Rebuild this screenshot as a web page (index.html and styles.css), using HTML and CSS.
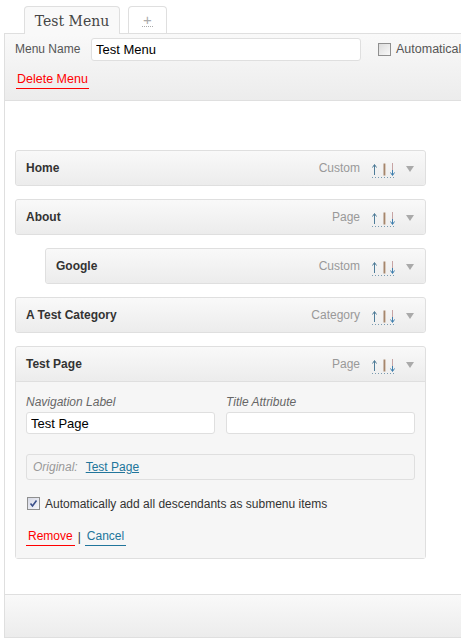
FILE: index.html
```html
<!DOCTYPE html>
<html>
<head>
<meta charset="utf-8">
<link rel="stylesheet" href="styles.css">
</head>
<body>
<div class="tabs">
  <div class="tab tab-active">Test Menu</div>
  <div class="tab tab-add"><span class="plus">+</span></div>
</div>
<div class="panel">
  <div class="panel-head">
    <div class="name-row">
      <span class="name-label">Menu Name</span>
      <input class="text-input name-input" type="text" value="Test Menu">
      <span class="auto">
        <span class="cb"></span>
        <span class="auto-text">Automatically add new top-level pages</span>
      </span>
    </div>
    <div class="del-row"><a class="delete">Delete Menu</a></div>
  </div>

  <div class="panel-body">
    <ul class="menu">
      <li class="item">
        <div class="item-head">
          <span class="item-title">Home</span>
          <span class="item-type">Custom</span>
          <svg class="arrows" width="28" height="18" viewBox="0 0 28 18"><g fill="none" stroke-width="1"><path d="M3.5 5 V15" stroke="#4f7c98"/><path d="M1.5 7.5 L3.5 4.5 L5.5 7.5" stroke="#4f7c98"/><rect x="12.5" y="3.5" width="1.5" height="12" fill="#a5866c" stroke="none"/><rect x="14" y="3.5" width="1" height="12" fill="#d9c9bc" stroke="none"/><path d="M21.5 3 V10" stroke="#c7a4a4"/><path d="M21.5 10 V15" stroke="#3f7fae"/><path d="M19.5 12.5 L21.5 15.5 L23.5 12.5" stroke="#3f7fae"/></g><path d="M1 17.5 H25" stroke="#7a9bb0" stroke-dasharray="1 2"/></svg>
          <span class="toggle"></span>
        </div>
      </li>
      <li class="item">
        <div class="item-head">
          <span class="item-title">About</span>
          <span class="item-type">Page</span>
          <svg class="arrows" width="28" height="18" viewBox="0 0 28 18"><g fill="none" stroke-width="1"><path d="M3.5 5 V15" stroke="#4f7c98"/><path d="M1.5 7.5 L3.5 4.5 L5.5 7.5" stroke="#4f7c98"/><rect x="12.5" y="3.5" width="1.5" height="12" fill="#a5866c" stroke="none"/><rect x="14" y="3.5" width="1" height="12" fill="#d9c9bc" stroke="none"/><path d="M21.5 3 V10" stroke="#c7a4a4"/><path d="M21.5 10 V15" stroke="#3f7fae"/><path d="M19.5 12.5 L21.5 15.5 L23.5 12.5" stroke="#3f7fae"/></g><path d="M1 17.5 H25" stroke="#7a9bb0" stroke-dasharray="1 2"/></svg>
          <span class="toggle"></span>
        </div>
      </li>
      <li class="item item-sub">
        <div class="item-head">
          <span class="item-title">Google</span>
          <span class="item-type">Custom</span>
          <svg class="arrows" width="28" height="18" viewBox="0 0 28 18"><g fill="none" stroke-width="1"><path d="M3.5 5 V15" stroke="#4f7c98"/><path d="M1.5 7.5 L3.5 4.5 L5.5 7.5" stroke="#4f7c98"/><rect x="12.5" y="3.5" width="1.5" height="12" fill="#a5866c" stroke="none"/><rect x="14" y="3.5" width="1" height="12" fill="#d9c9bc" stroke="none"/><path d="M21.5 3 V10" stroke="#c7a4a4"/><path d="M21.5 10 V15" stroke="#3f7fae"/><path d="M19.5 12.5 L21.5 15.5 L23.5 12.5" stroke="#3f7fae"/></g><path d="M1 17.5 H25" stroke="#7a9bb0" stroke-dasharray="1 2"/></svg>
          <span class="toggle"></span>
        </div>
      </li>
      <li class="item">
        <div class="item-head">
          <span class="item-title">A Test Category</span>
          <span class="item-type">Category</span>
          <svg class="arrows" width="28" height="18" viewBox="0 0 28 18"><g fill="none" stroke-width="1"><path d="M3.5 5 V15" stroke="#4f7c98"/><path d="M1.5 7.5 L3.5 4.5 L5.5 7.5" stroke="#4f7c98"/><rect x="12.5" y="3.5" width="1.5" height="12" fill="#a5866c" stroke="none"/><rect x="14" y="3.5" width="1" height="12" fill="#d9c9bc" stroke="none"/><path d="M21.5 3 V10" stroke="#c7a4a4"/><path d="M21.5 10 V15" stroke="#3f7fae"/><path d="M19.5 12.5 L21.5 15.5 L23.5 12.5" stroke="#3f7fae"/></g><path d="M1 17.5 H25" stroke="#7a9bb0" stroke-dasharray="1 2"/></svg>
          <span class="toggle"></span>
        </div>
      </li>
      <li class="item item-open">
        <div class="item-head">
          <span class="item-title">Test Page</span>
          <span class="item-type">Page</span>
          <svg class="arrows" width="28" height="18" viewBox="0 0 28 18"><g fill="none" stroke-width="1"><path d="M3.5 5 V15" stroke="#4f7c98"/><path d="M1.5 7.5 L3.5 4.5 L5.5 7.5" stroke="#4f7c98"/><rect x="12.5" y="3.5" width="1.5" height="12" fill="#a5866c" stroke="none"/><rect x="14" y="3.5" width="1" height="12" fill="#d9c9bc" stroke="none"/><path d="M21.5 3 V10" stroke="#c7a4a4"/><path d="M21.5 10 V15" stroke="#3f7fae"/><path d="M19.5 12.5 L21.5 15.5 L23.5 12.5" stroke="#3f7fae"/></g><path d="M1 17.5 H25" stroke="#7a9bb0" stroke-dasharray="1 2"/></svg>
          <span class="toggle"></span>
        </div>
        <div class="item-body">
          <div class="fields">
            <div class="field">
              <div class="field-label">Navigation Label</div>
              <input class="text-input" type="text" value="Test Page">
            </div>
            <div class="field">
              <div class="field-label">Title Attribute</div>
              <input class="text-input" type="text" value="">
            </div>
          </div>
          <div class="original"><span class="orig-label">Original:</span><a class="orig-link">Test Page</a></div>
          <div class="desc-row">
            <span class="cb cb-checked"><svg width="11" height="11" viewBox="0 0 11 11"><path d="M2.5 5.5 L4.5 8 L8.5 2.5" fill="none" stroke="#3a4f8a" stroke-width="1.6"/></svg></span>
            <span class="desc-text">Automatically add all descendants as submenu items</span>
          </div>
          <div class="actions"><a class="remove">Remove</a><span class="sep">|</span><a class="cancel">Cancel</a></div>
        </div>
      </li>
    </ul>
  </div>
  <div class="panel-foot"></div>
</div>
</body>
</html>
```

FILE: styles.css
```css
html, body {
  margin: 0;
  padding: 0;
  overflow: hidden;
  background: #fff;
}
body {
  font-family: "Liberation Sans", Arial, sans-serif;
  font-size: 12px;
  color: #333;
  width: 461px;
  height: 642px;
}
.tabs {
  display: flex;
  align-items: flex-end;
  gap: 8px;
  padding: 7px 0 0 24px;
  height: 27px;
  position: relative;
  z-index: 2;
}
.tab {
  box-sizing: border-box;
  height: 28px;
  border: 1px solid #dfdfdf;
  border-bottom: none;
  border-radius: 4px 4px 0 0;
  display: flex;
  align-items: center;
  justify-content: center;
}
.tab-active {
  width: 96px;
  background: #f9f9f9;
  font-family: "DejaVu Serif", "Liberation Serif", Georgia, serif;
  font-size: 14px;
  color: #464646;
  padding-top: 1px;
}
.tab-add {
  width: 39px;
  height: 27px;
  background: #fff;
  margin-bottom: 1px;
}
.plus {
  color: #aaa;
  font-size: 15px;
  line-height: 13px;
  border-bottom: 1px dotted #aaa;
  padding: 0 1px;
}
.panel {
  margin-left: 4px;
  width: 700px;
  border-left: 1px solid #dfdfdf;
  margin-top: -1px;
}
.panel-head {
  border-top: 1px solid #dfdfdf;
  border-bottom: 1px solid #dfdfdf;
  background: linear-gradient(#f9f9f9, #ececec);
  padding: 4px 0 0 10px;
  height: 62px;
}
.name-row {
  display: flex;
  align-items: center;
  height: 22px;
}
.name-label {
  color: #555;
  width: 76px;
}
.text-input {
  box-sizing: border-box;
  height: 23px;
  border: 1px solid #dfdfdf;
  border-radius: 3px;
  background: #fff;
  font-family: "Liberation Sans", Arial, sans-serif;
  font-size: 13px;
  color: #000;
  padding: 0 4px;
  margin: 0;
  outline: none;
}
.name-input {
  width: 270px;
}
.auto {
  display: flex;
  align-items: center;
  margin-left: 17px;
  color: #555;
  font-size: 12.5px;
}
.cb {
  box-sizing: border-box;
  width: 13px;
  height: 13px;
  border: 1px solid #8f8f8f;
  background: linear-gradient(135deg, #dcdcdc, #f8f8f8);
  display: inline-flex;
  align-items: center;
  justify-content: center;
  margin-right: 5px;
  flex: none;
}
.del-row {
  margin-top: 12px;
  padding-left: 1px;
}
.delete {
  color: #f00;
  font-size: 12.5px;
  padding: 0 1px 1px;
  border-bottom: 1px solid #f00;
  display: inline-block;
  line-height: 15px;
}
.panel-body {
  padding: 49px 0 35px 10px;
}
.menu {
  list-style: none;
  margin: 0;
  padding: 0;
  width: 411px;
  display: flex;
  flex-direction: column;
  gap: 13px;
}
.item {
  border: 1px solid #dfdfdf;
  border-radius: 3px;
  background: #f5f5f5;
}
.item-sub {
  margin-left: 30px;
}
.item-head {
  height: 34px;
  display: flex;
  align-items: center;
  padding: 0 11px 0 10px;
  background: linear-gradient(#f9f9f9, #ececec);
  border-radius: 3px;
}
.item-title {
  font-weight: bold;
  color: #333;
  flex: 1;
}
.item-type {
  color: #999;
  margin-right: 11px;
}
.arrows {
  margin-right: 7px;
  margin-top: 2px;
}
.toggle {
  width: 0;
  height: 0;
  border-left: 4px solid transparent;
  border-right: 4px solid transparent;
  border-top: 6px solid #aaa;
  margin-top: 1px;
}
.item-open .item-head {
  border-bottom: 1px solid #dfdfdf;
  border-radius: 3px 3px 0 0;
}
.item-body {
  padding: 13px 10px 12px 10px;
  background: #f6f6f6;
}
.fields {
  display: grid;
  grid-template-columns: 1fr 1fr;
  gap: 11px;
}
.field-label {
  color: #666;
  font-style: italic;
  line-height: 14px;
  margin-bottom: 3px;
}
.field .text-input {
  width: 100%;
  height: 22px;
}
.original {
  margin-top: 20px;
  height: 24px;
  border: 1px solid #dfdfdf;
  border-radius: 3px;
  background: #f5f5f5;
  display: flex;
  align-items: center;
  padding-left: 6px;
}
.orig-label {
  color: #999;
  font-style: italic;
  margin-right: 8px;
}
.orig-link {
  color: #21759b;
  text-decoration: underline;
}
.desc-row {
  display: flex;
  align-items: center;
  margin-top: 16px;
  padding-left: 1px;
  height: 15px;
}
.cb-checked {
  background: linear-gradient(135deg, #d6d9e6, #f6f7fb);
}
.desc-text {
  color: #333;
}
.actions {
  margin-top: 18px;
  display: flex;
  align-items: center;
  line-height: 15px;
}
.remove {
  color: #f00;
  border-bottom: 1px solid #f00;
  padding: 0 2px 1px;
}
.sep {
  color: #333;
  margin: 0 4px 0 3px;
}
.cancel {
  color: #21759b;
  border-bottom: 1px solid #21759b;
  padding: 0 2px 1px;
}
.panel-foot {
  height: 42px;
  border-top: 1px solid #dfdfdf;
  border-bottom: 1px solid #dfdfdf;
  background: linear-gradient(#f9f9f9, #ececec);
}
```
